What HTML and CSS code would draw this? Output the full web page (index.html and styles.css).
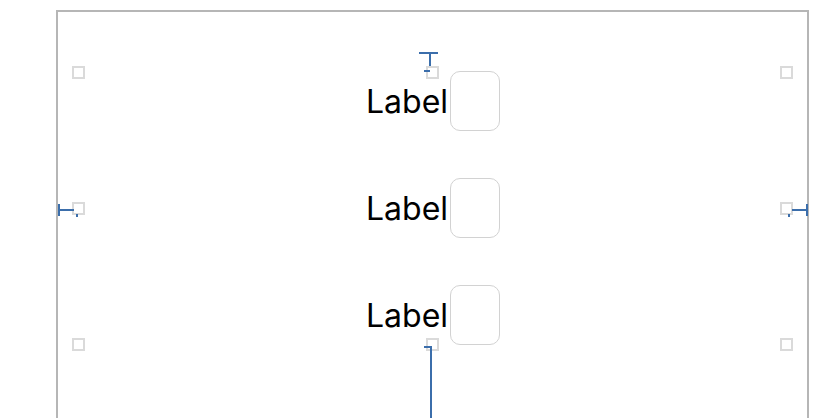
FILE: index.html
```html
<!DOCTYPE html>
<html>
<head>
<meta charset="utf-8">
<link rel="stylesheet" href="styles.css">
</head>
<body>
<div class="frame">
  <div class="stack">
    <span class="cst top-line"></span>

    <div class="row"><span class="label">Label</span><div class="box"></div></div>
    <div class="row"><span class="label">Label</span><div class="box"></div></div>
    <div class="row"><span class="label">Label</span><div class="box"></div></div>

    <span class="handle h-tl"></span>
    <span class="handle h-tm"></span>
    <span class="handle h-tr"></span>
    <span class="handle h-ml"></span>
    <span class="handle h-mr"></span>
    <span class="handle h-bl"></span>
    <span class="handle h-bm"></span>
    <span class="handle h-br"></span>

    <span class="cst top-bar"></span>
    <span class="cst top-tick"></span>

    <span class="cst left-bar"></span>
    <span class="cst left-line"></span>
    <span class="cst left-tick"></span>

    <span class="cst right-bar"></span>
    <span class="cst right-line"></span>
    <span class="cst right-tick"></span>

    <span class="cst bottom-tick"></span>
    <span class="cst bottom-line"></span>
  </div>
</div>
</body>
</html>
```
FILE: styles.css
```css
html, body {
  margin: 0;
  padding: 0;
  overflow: hidden;
  background: #ffffff;
}
body {
  width: 832px;
  height: 418px;
  font-family: "Inter", "Liberation Sans", sans-serif;
}
.frame {
  box-sizing: border-box;
  margin: 10px 0 0 56px;
  width: 753px;
  height: 520px;
  border: 2px solid #b6b6b6;
  padding: 59px 21px 0 21px;
}
.stack {
  position: relative;
  display: flex;
  flex-direction: column;
  gap: 47px;
}
.row {
  height: 60px;
  display: flex;
  align-items: center;
  justify-content: center;
  padding-left: 1px;
}
.label {
  font-size: 32px;
  color: #000000;
  line-height: 40px;
  margin-right: 2px;
  margin-top: 2px;
}
.box {
  box-sizing: border-box;
  width: 50px;
  height: 60px;
  border: 1px solid #d2d2d2;
  border-radius: 10px;
}
.handle {
  position: absolute;
  box-sizing: border-box;
  width: 13px;
  height: 13px;
  border: 2px solid #dadada;
  background: #ffffff;
}
.h-tl { left: -7px; top: -5px; }
.h-tm { left: 347px; top: -5px; }
.h-tr { left: 701px; top: -5px; }
.h-ml { left: -7px; top: 131px; }
.h-mr { left: 701px; top: 131px; }
.h-bl { left: -7px; top: 267px; }
.h-bm { left: 347px; top: 267px; }
.h-br { left: 701px; top: 267px; }

.cst {
  position: absolute;
  background: #3b6eab;
}
.top-bar { left: 340px; top: -19px; width: 19px; height: 2px; }
.top-line { left: 350px; top: -17px; width: 2px; height: 14px; }
.top-tick { left: 345px; top: -1px; width: 6px; height: 2px; }

.left-bar { left: -21px; top: 133px; width: 2px; height: 12px; }
.left-line { left: -19px; top: 138px; width: 14px; height: 2px; }
.left-tick { left: -3px; top: 143px; width: 2px; height: 3px; }

.right-bar { left: 727px; top: 133px; width: 2px; height: 12px; }
.right-line { left: 713px; top: 138px; width: 14px; height: 2px; }
.right-tick { left: 709px; top: 143px; width: 2px; height: 3px; }

.bottom-tick { left: 345px; top: 275px; width: 6px; height: 2px; }
.bottom-line { left: 351px; top: 275px; width: 2px; height: 100px; }
```
